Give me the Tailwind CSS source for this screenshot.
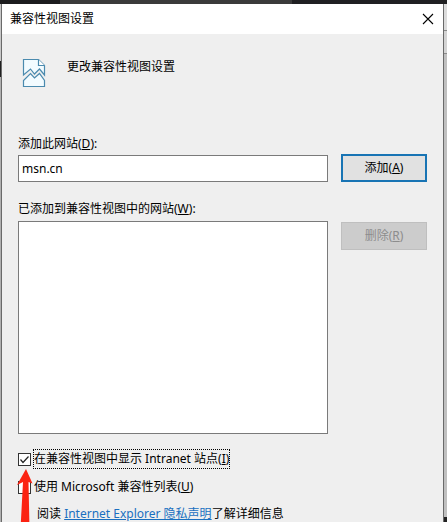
<!DOCTYPE html>
<html lang="zh-CN">
<head>
    <meta charset="UTF-8">
    <meta name="viewport" content="width=device-width, initial-scale=1.0">
    <title>兼容性视图设置</title>
    <script src="https://cdn.jsdelivr.net/npm/@tailwindcss/browser@4"></script>
</head>
<body class="h-screen overflow-hidden flex flex-col bg-[#c4c4c4] text-black text-[12px] leading-[18px] font-['Noto_Sans','Noto_Sans_CJK_SC',sans-serif]">
    <!-- window behind the dialog -->
    <div class="h-1 shrink-0 flex">
        <div class="w-[60px] bg-[#1c1c1e]"></div>
        <div class="flex-3 bg-[#3a3a3a]"></div>
        <div class="flex-2 bg-[#202022]"></div>
    </div>
    <div class="flex flex-1 min-h-0">
        <div class="w-px flex flex-col">
            <div class="h-[57px] bg-[#c8c8c8]"></div>
            <div class="h-4 bg-[#202020]"></div>
            <div class="flex-1 bg-[#b0b0b0]"></div>
        </div>

        <main class="flex-1 min-w-0 bg-[#efefef] border-x border-[#6a6a6a]">
            <header class="h-[30px] bg-white flex items-center justify-between pl-2 pr-[9px]">
                <h1>兼容性视图设置</h1>
                <button type="button" aria-label="关闭">
                    <svg class="block" width="12" height="12" viewBox="0 0 12 12" fill="none" stroke="#000" stroke-width="1.1">
                        <path d="M1 1l10 10M11 1L1 11"/>
                    </svg>
                </button>
            </header>

            <form class="px-4" onsubmit="return false">
                <div class="flex pt-[24px] pl-1 gap-[21px] h-[98px]">
                    <svg width="24" height="30" viewBox="0 0 24 30" fill="#f2fbff" stroke="#4a8aae" stroke-width="1.2">
                        <path d="M1.500 17V1.500H16.500L22.500 7.500V17L17.500 11L12.500 16L8.500 11L1.500 17Z"/>
                        <path d="M16.500 1.500V7.500H22.500" fill="#fff"/>
                        <path d="M1.500 28.500V22.500L8.500 15.500L12.500 20L17.500 15.500L22.500 22.500V28.500Z"/>
                    </svg>
                    <h2>更改兼容性视图设置</h2>
                </div>

                <label for="site" class="block pt-[3px] -mb-px">添加此网站(<u>D</u>):</label>
                <div class="flex items-center gap-[13px] h-[32px]">
                    <input type="text" id="site" value="msn.cn" class="flex-1 min-w-0 h-[27px] px-[3px] bg-white border border-[#7a7a7a] outline-none">
                    <button type="button" class="w-[86px] h-[28px] bg-[#e1e1e1] border-2 border-[#1874b4]">添加(<u>A</u>)</button>
                </div>

                <label for="sites" class="block pt-4 pb-[3px]">已添加到兼容性视图中的网站(<u>W</u>):</label>
                <div class="flex items-start gap-[13px]">
                    <select id="sites" size="10" class="flex-1 min-w-0 h-[213px] bg-white border border-[#7a7a7a] outline-none"></select>
                    <button type="button" disabled class="w-[86px] h-[28px] mt-px bg-[#cccccc] border border-[#bfbfbf] text-[#8d8d8d]">删除(<u>R</u>)</button>
                </div>

                <div class="relative pt-[15px]">
                    <div class="flex items-center gap-[2px] h-[20px]">
                        <span class="relative flex">
                            <input type="checkbox" id="intranet" checked class="appearance-none size-[13px] bg-white border border-[#333]">
                            <svg class="absolute inset-0 pointer-events-none" width="13" height="13" viewBox="0 0 13 13" fill="none" stroke="#222" stroke-width="1.2">
                                <path d="M2.500 6.500L5 9.500L10.500 3.500"/>
                            </svg>
                        </span>
                        <label for="intranet" class="border border-dotted border-black">在兼容性视图中显示 Intranet 站点(<u>I</u>)</label>
                    </div>
                    <div class="flex items-center gap-[3px] h-[20px] mt-2">
                        <input type="checkbox" id="mslist" class="appearance-none size-[13px] bg-white border border-[#333]">
                        <label for="mslist">使用 Microsoft 兼容性列表(<u>U</u>)</label>
                    </div>
                    <p class="pl-[19px] pt-2">阅读 <a href="#" class="text-[#1a6fc0] underline">Internet Explorer 隐私声明</a>了解详细信息</p>

                    <!-- red pointer arrow -->
                    <svg class="absolute -left-0.5 top-[35px] pointer-events-none" width="18" height="60" viewBox="0 0 18 60" fill="#fb2312">
                        <path d="M10 0L16.500 14.500L12.500 13L13.500 60H4.500L7 13L1 16Z"/>
                    </svg>
                </div>
            </form>
        </main>

        <div class="w-[3px] flex flex-col">
            <div class="h-[27px] bg-[#dcdcdc] border-b border-[#8a8a8a]"></div>
            <div class="h-[23px] bg-[#d4d4d4] border-b border-[#8a8a8a]"></div>
            <div class="flex-1 bg-[#c0c0c0]"></div>
            <div class="h-[5px] bg-[#222]"></div>
        </div>
    </div>
</body>
</html>
